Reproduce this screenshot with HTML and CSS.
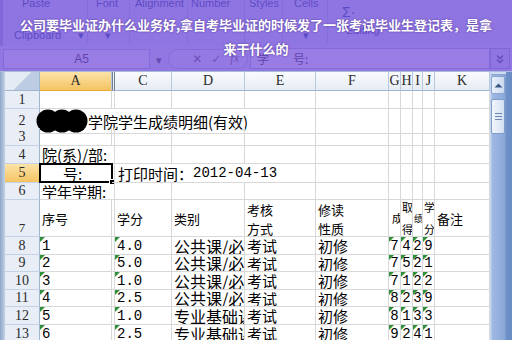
FILE: index.html
```html
<!DOCTYPE html>
<html lang="zh">
<head>
<meta charset="utf-8">
<title>成绩明细</title>
<link rel="stylesheet" href="styles.css">
</head>
<body>
<div class="app">
  <header class="top">
    <div class="ribbon">
      <div class="grp g1"><span class="lbl">Paste</span><span class="blbl">Clipboard <span class="launch">▾</span></span></div>
      <div class="grp g2"><span class="lbl">Font</span><span class="blbl dd">▾</span></div>
      <div class="grp g3"><span class="lbl">Alignment</span></div>
      <div class="grp g4"><span class="lbl">Number</span></div>
      <div class="grp g5"><span class="lbl">Styles</span></div>
      <div class="grp g6"><span class="lbl">Cells</span><span class="blbl dd">▾</span></div>
      <div class="grp g7"><span class="lbl sig">Σ·</span><span class="blbl">Editing</span></div>
    </div>
    <div class="fbar">
      <div class="namebox">A5</div>
      <span class="nbdrop">▾</span>
      <div class="pill"><span>✕</span><span>✓</span><span class="fx">fx</span></div>
      <div class="finput">学　　号:</div>
      <div class="expand">
        <svg width="10" height="10" viewBox="0 0 10 10"><path d="M2 1.5l3 3 3-3M2 5.5l3 3 3-3" fill="none" stroke="#1f3b6e" stroke-width="1.4"/></svg>
      </div>
    </div>
    <div class="overlay">
      <p class="title">公司要毕业证办什么业务好,拿自考毕业证的时候发了一张考试毕业生登记表，是拿来干什么的</p>
    </div>
  </header>

  <div class="sheet">
    <div class="frame"></div>
    <div class="grid">
      <div class="row h19 hdr">
        <div class="c corner"></div>
        <div class="c ch sel">A</div>
        <div class="c ch colb"></div>
        <div class="c ch">C</div>
        <div class="c ch">D</div>
        <div class="c ch">E</div>
        <div class="c ch">F</div>
        <div class="c ch">G</div>
        <div class="c ch">H</div>
        <div class="c ch">I</div>
        <div class="c ch">J</div>
        <div class="c ch">K</div>
      </div>

      <div class="row h18">
        <div class="c rh">1</div>
        <div class="c"></div><div class="c"></div><div class="c"></div><div class="c"></div><div class="c"></div><div class="c"></div><div class="c"></div><div class="c"></div><div class="c"></div><div class="c"></div><div class="c"></div>
      </div>

      <div class="row h19">
        <div class="c rh">2</div>
        <div class="c s5 vis">
          <svg class="blot" width="52" height="24" viewBox="0 0 52 24"><circle cx="12" cy="12" r="11.5"/><circle cx="26" cy="12" r="11.5"/><circle cx="40" cy="12" r="11.5"/></svg>
          <span>学院学生成绩明细(有效)</span>
        </div>
        <div class="c"></div><div class="c"></div><div class="c"></div><div class="c"></div><div class="c"></div><div class="c"></div>
      </div>

      <div class="row h18">
        <div class="c rh">3</div>
        <div class="c"></div><div class="c"></div><div class="c"></div><div class="c"></div><div class="c"></div><div class="c"></div><div class="c"></div><div class="c"></div><div class="c"></div><div class="c"></div><div class="c"></div>
      </div>

      <div class="row h18">
        <div class="c rh">4</div>
        <div class="c s2">院(系)/部:</div>
        <div class="c"></div><div class="c"></div><div class="c"></div><div class="c"></div><div class="c"></div><div class="c"></div><div class="c"></div><div class="c"></div><div class="c"></div>
      </div>

      <div class="row h19">
        <div class="c rh rsel">5</div>
        <div class="c active"><span class="a5">号:</span><span class="selbox"></span><span class="handle"></span></div>
        <div class="c"></div>
        <div class="c s3">打印时间：<span class="num">2012-04-13</span></div>
        <div class="c"></div><div class="c"></div><div class="c"></div><div class="c"></div><div class="c"></div><div class="c"></div>
      </div>

      <div class="row h17">
        <div class="c rh">6</div>
        <div class="c s2">学年学期:</div>
        <div class="c"></div><div class="c"></div><div class="c"></div><div class="c"></div><div class="c"></div><div class="c"></div><div class="c"></div><div class="c"></div><div class="c"></div>
      </div>

      <div class="row h37 thead">
        <div class="c rh bottom">7</div>
        <div class="c">序号</div>
        <div class="c"></div>
        <div class="c">学分</div>
        <div class="c">类别</div>
        <div class="c two">考核<br>方式</div>
        <div class="c two">修读<br>性质</div>
        <div class="c tiny">成</div>
        <div class="c tiny two2">取<br>得</div>
        <div class="c tiny mini">绩</div>
        <div class="c tiny two2">学<br>分</div>
        <div class="c">备注</div>
      </div>

      <div class="row h18">
        <div class="c rh">8</div>
        <div class="c g num">1</div><div class="c"></div><div class="c g num">4.0</div>
        <div class="c cat">公共课/必修</div><div class="c">考试</div><div class="c">初修</div>
        <div class="c g d">7</div><div class="c g d">4</div><div class="c g d">2</div><div class="c g d">9</div><div class="c"></div>
      </div>
      <div class="row h17">
        <div class="c rh">9</div>
        <div class="c g num">2</div><div class="c"></div><div class="c g num">5.0</div>
        <div class="c cat">公共课/必修</div><div class="c">考试</div><div class="c">初修</div>
        <div class="c g d">7</div><div class="c g d">5</div><div class="c g d">2</div><div class="c g d">1</div><div class="c"></div>
      </div>
      <div class="row h18">
        <div class="c rh">10</div>
        <div class="c g num">3</div><div class="c"></div><div class="c g num">1.0</div>
        <div class="c cat">公共课/必修</div><div class="c">考试</div><div class="c">初修</div>
        <div class="c g d">7</div><div class="c g d">1</div><div class="c g d">2</div><div class="c g d">2</div><div class="c"></div>
      </div>
      <div class="row h17">
        <div class="c rh">11</div>
        <div class="c g num">4</div><div class="c"></div><div class="c g num">2.5</div>
        <div class="c cat">公共课/必修</div><div class="c">考试</div><div class="c">初修</div>
        <div class="c g d">8</div><div class="c g d">2</div><div class="c g d">3</div><div class="c g d">9</div><div class="c"></div>
      </div>
      <div class="row h18">
        <div class="c rh">12</div>
        <div class="c g num">5</div><div class="c"></div><div class="c g num">1.0</div>
        <div class="c cat">专业基础课</div><div class="c">考试</div><div class="c">初修</div>
        <div class="c g d">8</div><div class="c g d">1</div><div class="c g d">3</div><div class="c g d">3</div><div class="c"></div>
      </div>
      <div class="row h18">
        <div class="c rh">13</div>
        <div class="c g num">6</div><div class="c"></div><div class="c g num">2.5</div>
        <div class="c cat">专业基础课</div><div class="c">考试</div><div class="c">初修</div>
        <div class="c g d">9</div><div class="c g d">2</div><div class="c g d">4</div><div class="c g d">1</div><div class="c"></div>
      </div>
    </div>
    <div class="vscroll">
      <div class="split"></div>
      <div class="sbtn"><svg width="9" height="6" viewBox="0 0 9 6"><path d="M0.5 5.5L4.5 1.5L8.5 5.5Z" fill="#3b5a8a"/></svg></div>
      <div class="thumb"><span></span><span></span><span></span></div>
      <div class="track"></div>
    </div>
  </div>
</div>
</body>
</html>
```

FILE: styles.css
```css
* { box-sizing: border-box; }

html, body {
  margin: 0;
  padding: 0;
}

body {
  width: 512px;
  height: 340px;
  overflow: hidden;
  background: #fff;
  font-family: "Noto Sans CJK SC", sans-serif;
}

.app {
  width: 512px;
  height: 340px;
  overflow: hidden;
  display: flex;
  flex-direction: column;
}

/* ---------- top: ribbon + formula bar under the overlay ---------- */
.top {
  position: relative;
  height: 72px;
  flex: none;
  background: #d9e4f2;
  border-bottom: 1px solid #a8bcd8;
}

.ribbon {
  height: 46px;
  display: flex;
  font-family: "Liberation Sans", sans-serif;
  font-size: 11px;
  color: #15428b;
  border-left: 3px solid #9fb3d3;
}

.grp {
  display: flex;
  flex-direction: column;
  border-right: 1px solid #b3c5de;
  margin-bottom: 3px;
}

.lbl {
  display: block;
  margin-top: -3px;
  line-height: 12px;
}

.blbl {
  display: block;
  margin-top: 20px;
  line-height: 12px;
}

.g1 { width: 85px; padding-left: 19px; }
.g1 .blbl { margin-left: -8px; }
.launch { margin-left: 14px; }
.g2 { width: 42px; padding-left: 8px; }
.g2 .dd, .g6 .dd { margin-left: 9px; }
.g3 { width: 58px; padding-left: 5px; }
.g4 { width: 57px; padding-left: 3px; }
.g5 { width: 38px; padding-left: 4px; }
.g6 { width: 45px; padding-left: 11px; }
.g7 { flex: 1; padding-left: 14px; border-right: 0; }
.g7 .sig { margin-top: 6px; font-size: 14px; }
.g7 .blbl { margin-top: 6px; margin-left: 4px; }

.fbar {
  height: 25px;
  display: flex;
  align-items: center;
  background: #e3ebf6;
  padding: 0 0 0 3px;
  font-size: 12px;
  color: #1e1e1e;
}

.namebox {
  width: 147px;
  height: 20px;
  background: #fff;
  border: 1px solid #a9bfd6;
  text-align: center;
  font-family: "Liberation Sans", sans-serif;
  line-height: 18px;
  padding-left: 10px;
}

.nbdrop {
  width: 18px;
  text-align: center;
  font-size: 11px;
  color: #333;
}

.pill {
  width: 80px;
  height: 20px;
  border: 1px solid #a9bfd6;
  border-radius: 10px;
  display: flex;
  align-items: center;
  justify-content: flex-end;
  gap: 9px;
  padding-right: 8px;
  background: #eef3fa;
  font-family: "DejaVu Sans", sans-serif;
  color: #555;
}

.fx {
  font-family: "Liberation Serif", serif;
  font-style: italic;
}

.finput {
  flex: 1;
  height: 21px;
  background: #fff;
  border: 1px solid #a9bfd6;
  line-height: 19px;
  padding-left: 6px;
  margin-left: 2px;
}

.expand {
  width: 20px;
  height: 21px;
  display: flex;
  align-items: center;
  justify-content: center;
  background: #d6e2f2;
  border: 1px solid #8fa9cf;
  margin-right: 2px;
}

.overlay {
  position: absolute;
  left: 0;
  top: 0;
  width: 512px;
  height: 71px;
  background: rgba(118, 78, 218, 0.74);
  display: flex;
  justify-content: center;
}

.title {
  width: 480px;
  margin: 13px 0 0;
  text-align: center;
  font-size: 13px;
  font-weight: bold;
  line-height: 24px;
  color: #fff;
  text-shadow: 0 0 2px rgba(50, 20, 110, 0.7);
}

/* ---------- sheet ---------- */
.sheet {
  flex: 1;
  display: flex;
  min-height: 0;
}

.frame {
  width: 5px;
  background: linear-gradient(to right, #8ea6c8, #c3d3e8);
  flex: none;
}

.grid {
  width: 485px;
  flex: none;
  overflow: hidden;
}

.row {
  display: grid;
  grid-template-columns: 35px 72px 3px 57px 73px 71px 73px 12px 12px 10px 12px 55px;
}

.h17 { height: 17px; }
.h18 { height: 18px; }
.h19 { height: 19px; }
.h37 { height: 37px; }

.c {
  position: relative;
  display: flex;
  align-items: center;
  border-right: 1px solid #d8d8d8;
  border-bottom: 1px solid #d8d8d8;
  padding-left: 2px;
  overflow: hidden;
  white-space: nowrap;
  font-size: 15px;
  color: #000;
  line-height: 1;
}

.c.cat { font-size: 16px; }

.s2 { grid-column: span 2; }
.s3 { grid-column: span 3; padding-left: 3px; }
.s5 { grid-column: span 5; padding-left: 0; }
.vis { overflow: visible; }

.blot {
  flex: none;
  margin-left: -4px;
  margin-right: 0px;
  fill: #000;
}

/* headers */
.hdr .c {
  justify-content: center;
  padding-left: 0;
  font-family: "Liberation Serif", serif;
  font-size: 14px;
  color: #2b2b2b;
  background: linear-gradient(#f9fbfd, #e6ecf5);
  border-right: 1px solid #b7c7dc;
  border-bottom: 1px solid #9eb6ce;
}

.hdr .sel {
  background: linear-gradient(#fbe3a9, #f5c462);
  border-bottom: 1px solid #e6a93a;
}

.hdr .colb {
  border-left: 1px solid #6f7f96;
  border-right: 1px solid #6f7f96;
}

.hdr .corner {
  background: linear-gradient(135deg, #e4ebf5 50%, #bccde3 50%);
  border-right: 1px solid #9eb6ce;
}

.rh {
  justify-content: center;
  padding-left: 0;
  font-family: "Liberation Serif", serif;
  font-size: 14px;
  color: #2b2b2b;
  background: #e8edf6;
  border-right: 1px solid #9eb6ce;
  border-bottom: 1px solid #c5d2e3;
}

.rh.rsel {
  background: linear-gradient(#fbe3a9, #f5c462);
  border-right: 1px solid #e6a93a;
}

.rh.bottom {
  align-items: flex-end;
  padding-bottom: 2px;
}

/* active cell */
.active { overflow: visible; }
.a5 { margin-left: 21px; }

.selbox {
  position: absolute;
  left: -1px;
  top: -1px;
  right: -2px;
  bottom: -1px;
  border: 2px solid #000;
  pointer-events: none;
}

.handle {
  position: absolute;
  right: -4px;
  bottom: -3px;
  width: 6px;
  height: 6px;
  background: #000;
  border: 1px solid #fff;
}

/* header row 7 */
.thead .c { font-size: 13px; }
.thead .two { line-height: 19px; white-space: normal; padding-top: 2px; }
.thead .tiny { font-size: 11px; padding-left: 3px; }
.thead .two2 { line-height: 22px; white-space: normal; padding-left: 1px; }
.thead .mini { font-size: 9px; padding-left: 1px; }

/* numbers */
.num {
  font-family: "Liberation Mono", monospace;
  font-size: 14px;
}

.d {
  justify-content: center;
  padding-left: 0;
  font-family: "Liberation Mono", monospace;
  font-size: 14px;
}

.g::before {
  content: "";
  position: absolute;
  left: 0;
  top: 0;
  border-top: 5px solid #2f8f3a;
  border-right: 5px solid transparent;
}

/* scrollbar */
.vscroll {
  flex: 1;
  display: flex;
  flex-direction: column;
  align-items: flex-start;
  background: linear-gradient(to right, #c6d6ee 0, #c6d6ee 1px, #9fb9e2 2px, #8aa7d8 15px, #6f91c9 16px, #6a8cc4 22px);
}

.split {
  width: 15px;
  height: 3px;
  margin-left: 1px;
  background: #d0dcef;
  border-bottom: 1px solid #8aa5cf;
}

.sbtn {
  width: 14px;
  height: 18px;
  margin: 1px 0 0 1px;
  background: linear-gradient(to right, #e9f0fa, #cbdaf0);
  border: 1px solid #8aa5cf;
  border-radius: 2px;
  display: flex;
  align-items: center;
  justify-content: center;
}

.thumb {
  width: 14px;
  height: 35px;
  margin: 5px 0 0 1px;
  background: linear-gradient(to right, #f2f6fc, #d3e0f3);
  border: 1px solid #7f9ccb;
  border-radius: 2px;
  display: flex;
  flex-direction: column;
  align-items: center;
  justify-content: center;
  gap: 2px;
}

.thumb span {
  display: block;
  width: 7px;
  height: 1px;
  background: #6e87b0;
}

.track { flex: 1; }
```
